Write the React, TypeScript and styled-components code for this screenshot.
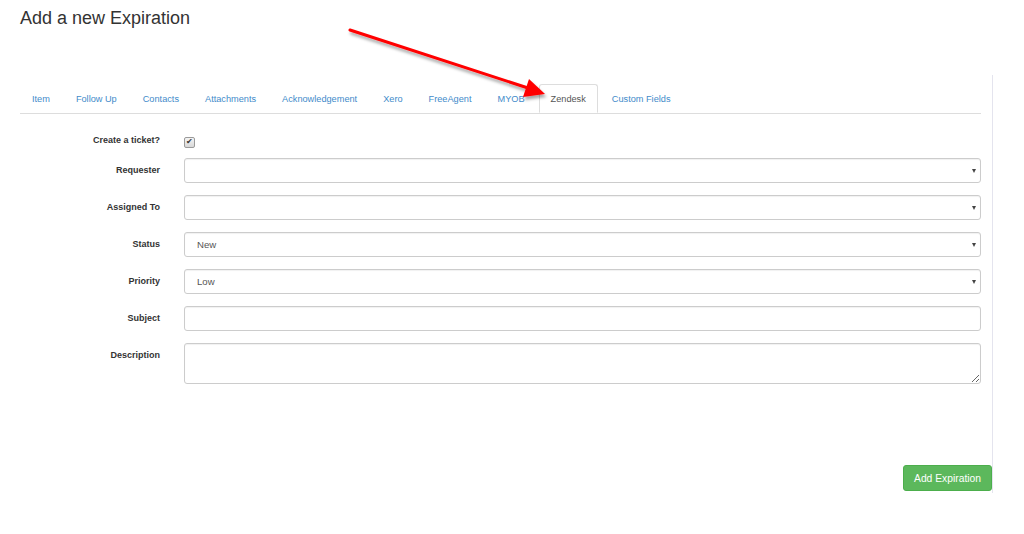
import React from 'react';
import styled, { createGlobalStyle } from 'styled-components';

const GlobalStyle = createGlobalStyle`
    html, body {
        margin: 0;
        padding: 0;
        background: #ffffff;
        font-family: 'Liberation Sans', Arial, sans-serif;
        color: #333333;
    }
`;

const Page = styled.div`
    position: relative;
    width: 1024px;
    height: 534px;
    overflow: hidden;
`;

const Title = styled.h1`
    margin: 0;
    padding: 7px 0 0 20px;
    font-size: 18px;
    line-height: 22px;
    font-weight: normal;
    color: #333333;
`;

const Panel = styled.div`
    margin: 46px 0 0 20px;
    width: 972px;
    border-right: 1px solid #e4e4ee;
    padding-top: 9px;
    padding-bottom: 2px;
    display: flex;
    flex-direction: column;
`;

const Tabs = styled.ul`
    list-style: none;
    margin: 0 11px 0 0;
    padding: 0;
    display: flex;
    border-bottom: 1px solid #dddddd;
    height: 29px;
`;

const Tab = styled.li<{ $active?: boolean }>`
    margin: 0 2px -1px 0;
    padding: 0 11px;
    height: 29px;
    line-height: 28px;
    font-size: 9.2px;
    box-sizing: border-box;
    border: 1px solid ${(p) => (p.$active ? '#dddddd' : 'transparent')};
    border-bottom-color: ${(p) => (p.$active ? '#ffffff' : 'transparent')};
    border-radius: 3px 3px 0 0;
    background: #ffffff;
    color: ${(p) => (p.$active ? '#555555' : '#428bca')};
    cursor: pointer;
`;

const Form = styled.form`
    margin: 0 11px 0 0;
    padding-top: 15px;
    display: grid;
    grid-template-columns: 140px 1fr;
    column-gap: 24px;
    row-gap: 12px;
`;

const Label = styled.label<{ $top?: number }>`
    text-align: right;
    font-size: 9px;
    font-weight: bold;
    line-height: 12px;
    padding-top: ${(p) => p.$top ?? 6}px;
    color: #333333;
`;

const CheckCell = styled.div`
    height: 16px;
    padding-top: 1px;
`;

const CheckBox = styled.span`
    display: inline-flex;
    align-items: center;
    justify-content: center;
    width: 9px;
    height: 9px;
    border: 1px solid #9a9a9a;
    border-radius: 2px;
    background: linear-gradient(#f4f4f4, #d8d8d8);
    color: #333333;
    font-size: 8px;
    line-height: 8px;
`;

const fieldStyles = `
    box-sizing: border-box;
    width: 100%;
    border: 1px solid #cccccc;
    border-radius: 3px;
    box-shadow: inset 0 1px 1px rgba(0, 0, 0, 0.06);
    background: #ffffff;
    font-family: 'Liberation Sans', Arial, sans-serif;
    font-size: 9.6px;
    color: #555555;
    padding: 0 12px;
    margin: 0;
    outline: none;
`;

const SelectWrap = styled.div`
    position: relative;

    &::after {
        content: '';
        position: absolute;
        right: 5px;
        top: 11px;
        border-left: 2.5px solid transparent;
        border-right: 2.5px solid transparent;
        border-top: 4px solid #444444;
        pointer-events: none;
    }
`;

const Select = styled.select`
    ${fieldStyles}
    height: 25px;
    display: block;
    appearance: none;
    -webkit-appearance: none;
`;

const TextInput = styled.input`
    ${fieldStyles}
    height: 25px;
    display: block;
`;

const TextArea = styled.textarea`
    ${fieldStyles}
    display: block;
    height: 41px;
    padding-top: 6px;
    resize: vertical;
`;

const Footer = styled.div`
    display: flex;
    justify-content: flex-end;
    margin-top: 81px;
`;

const SubmitButton = styled.button`
    height: 26px;
    padding: 0 10px;
    border: 1px solid #4cae4c;
    border-radius: 3px;
    background: #5cb85c;
    color: #ffffff;
    font-family: 'Liberation Sans', Arial, sans-serif;
    font-size: 10.3px;
    cursor: pointer;
`;

const ArrowOverlay = styled.svg`
    position: absolute;
    left: 0;
    top: 0;
    pointer-events: none;
`;

const tabs = [
    'Item',
    'Follow Up',
    'Contacts',
    'Attachments',
    'Acknowledgement',
    'Xero',
    'FreeAgent',
    'MYOB',
    'Zendesk',
    'Custom Fields',
];

type SelectFieldProps = {
    label: string;
    value?: string;
};

const SelectField = ({ label, value = '' }: SelectFieldProps) => (
    <>
        <Label>{label}</Label>
        <SelectWrap>
            <Select defaultValue={value}>
                <option value={value}>{value}</option>
            </Select>
        </SelectWrap>
    </>
);

export default function App() {
    return (
        <Page>
            <GlobalStyle />
            <Title>Add a new Expiration</Title>
            <Panel>
                <Tabs>
                    {tabs.map((tab) => (
                        <Tab key={tab} $active={tab === 'Zendesk'}>
                            {tab}
                        </Tab>
                    ))}
                </Tabs>
                <Form onSubmit={(e) => e.preventDefault()}>
                    <Label $top={5}>Create a ticket?</Label>
                    <CheckCell>
                        <CheckBox>✔</CheckBox>
                    </CheckCell>
                    <SelectField label="Requester" />
                    <SelectField label="Assigned To" />
                    <SelectField label="Status" value="New" />
                    <SelectField label="Priority" value="Low" />
                    <Label>Subject</Label>
                    <TextInput type="text" />
                    <Label>Description</Label>
                    <TextArea />
                </Form>
                <Footer>
                    <SubmitButton type="button">Add Expiration</SubmitButton>
                </Footer>
            </Panel>
            {/* red annotation arrow pointing at the Zendesk tab */}
            <ArrowOverlay width="1024" height="534" viewBox="0 0 1024 534">
                <defs>
                    <filter id="arrowShadow" x="-10%" y="-10%" width="120%" height="140%">
                        <feDropShadow dx="1.5" dy="3" stdDeviation="1.5" floodColor="#000" floodOpacity="0.35" />
                    </filter>
                </defs>
                <g filter="url(#arrowShadow)">
                    <line x1="350" y1="30" x2="528" y2="88" stroke="#ff0000" strokeWidth="3" strokeLinecap="round" />
                    <polygon points="545,94 523,97 529,79" fill="#ff0000" />
                </g>
            </ArrowOverlay>
        </Page>
    );
}
